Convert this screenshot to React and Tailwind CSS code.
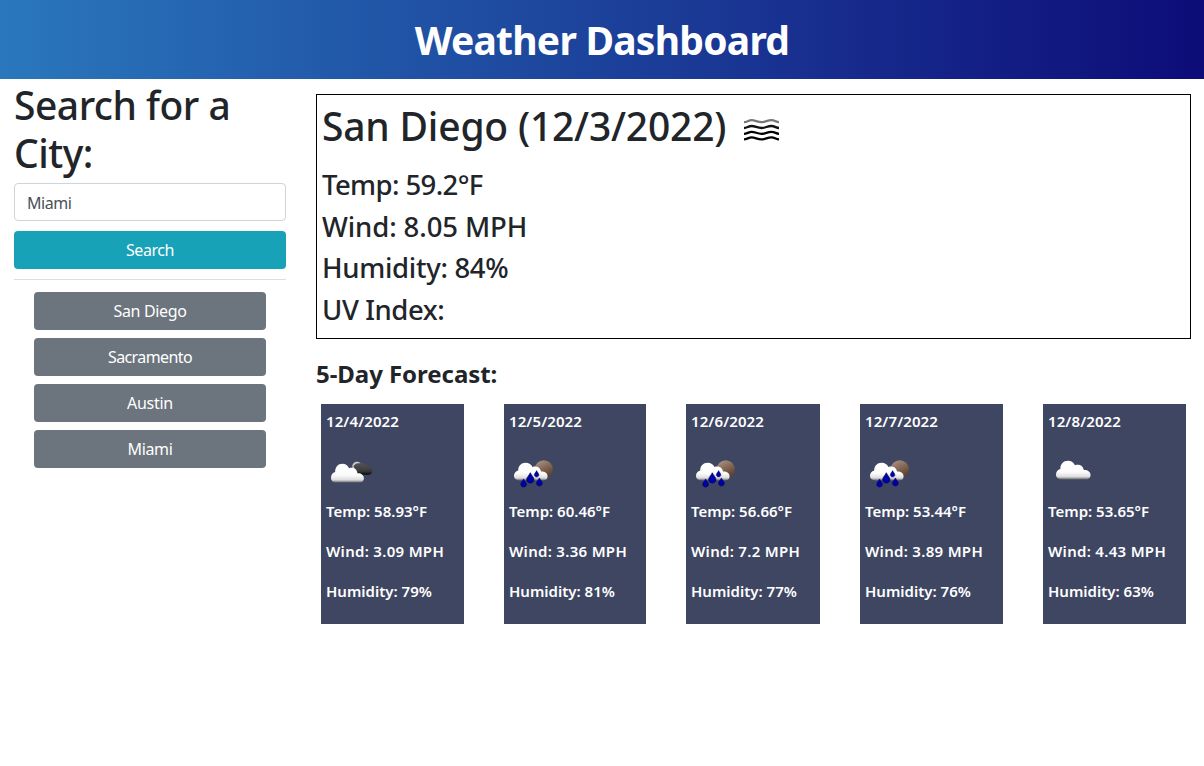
const CLOUD =
  "M5.2 18.6C2 18.6 0 16.6 0 13.8C0 11 1.6 9 4.2 8.2C4.2 3.6 7.2 0.2 11.6 0.2C14.9 0.2 17.4 2 18.4 4.6C19.3 4.1 20.2 4 21.2 4C24.4 4 26.6 6.2 27 9.4C30.8 9.2 33.6 11.3 33.6 14.4C33.6 17 31.6 18.6 29 18.6Z";

function Gradients() {
  return (
    <svg width="0" height="0" className="absolute" aria-hidden="true">
      <defs>
        <linearGradient id="cloud" x1="0" y1="0" x2="0" y2="1">
          <stop offset="0" stopColor="#ffffff" />
          <stop offset="0.6" stopColor="#fcfcfc" />
          <stop offset="0.86" stopColor="#dcdcdc" />
          <stop offset="0.93" stopColor="#a0a0a0" />
          <stop offset="1" stopColor="#66676c" />
        </linearGradient>
        <linearGradient id="dark" x1="0" y1="0" x2="0" y2="1">
          <stop offset="0" stopColor="#555555" />
          <stop offset="0.7" stopColor="#3a3a3a" />
          <stop offset="1" stopColor="#090909" />
        </linearGradient>
        <linearGradient id="moon" x1="0" y1="0" x2="0.5" y2="1">
          <stop offset="0" stopColor="#b29a8b" />
          <stop offset="0.5" stopColor="#876c59" />
          <stop offset="1" stopColor="#5e412c" />
        </linearGradient>
      </defs>
    </svg>
  );
}

function Drop({ x, y, s }) {
  return (
    <path
      transform={`translate(${x} ${y}) scale(${s})`}
      d="M0 -4.2C1 -1.8 2.9 -0.6 2.9 1.2C2.9 2.9 1.6 4 0 4C-1.6 4 -2.9 2.9 -2.9 1.2C-2.9 -0.6 -1 -1.8 0 -4.2Z"
      fill="#0000a8"
      stroke="#00005f"
      strokeWidth="0.6"
    />
  );
}

function Icon({ kind }) {
  return (
    <svg viewBox="0 0 50 50" className="block size-[50px]">
      {kind === "broken" && (
        <>
          <path d="M26.5 22C25.6 18 28 15.7 31 15.7C32.6 15.7 34 16.3 34.8 17.3L29 25Z" fill="#c8c8c8" />
          <path d="M27.5 20.5C28.2 18 31 16.7 33.4 17.3C35 16.2 37.7 16.6 38.8 18.8C39.6 18.6 41 19.1 41.5 20.6C44.5 20.2 46.2 21.7 46.2 24.6C46.2 27.4 45.3 28.7 43 28.7H32Z" fill="url(#dark)" />
          <path d={CLOUD} transform="translate(5 17.6) scale(.98 1.02)" fill="url(#cloud)" />
        </>
      )}
      {kind === "rain" && (
        <>
          <circle cx="34.8" cy="23.2" r="9" fill="url(#moon)" />
          <path d={CLOUD} transform="translate(5 16.6) scale(1 .96)" fill="url(#cloud)" />
          <Drop x={14.6} y={37.1} s={0.98} />
          <Drop x={21.3} y={32} s={1.25} />
          <Drop x={27.6} y={27.9} s={0.78} />
          <Drop x={30.4} y={36} s={0.98} />
        </>
      )}
      {kind === "cloudy" && (
        <path d={CLOUD} transform="translate(8 14.6) scale(1.03 1.01)" fill="url(#cloud)" />
      )}
    </svg>
  );
}

function FogIcon() {
  const wave = "c3 0 4.5-2 7.7-2s6 2 9.8 2 6-2 9.8-2 4.7 2 7.7 2";
  return (
    <svg viewBox="0 0 50 50" className="size-[50px]" fill="none" strokeWidth="2.3">
      <path d={`M8 17.2${wave}`} stroke="#777777" />
      <path d={`M8 23${wave}`} stroke="#111111" />
      <path d={`M8 28.8${wave}`} stroke="#000000" />
      <path d={`M8 34.4${wave}`} stroke="#000000" />
    </svg>
  );
}

const history = [
  ["San Diego", "tracking-[-0.35px]"],
  ["Sacramento", "tracking-[-0.6px]"],
  ["Austin", "tracking-[-0.3px]"],
  ["Miami", "tracking-[-0.35px]"],
];

const current = [
  ["Temp: 59.2°F", "tracking-[-0.6px]"],
  ["Wind: 8.05 MPH", "tracking-[-0.1px]"],
  ["Humidity: 84%", "tracking-[-0.3px]"],
  ["UV Index:", "tracking-[-0.4px]"],
];

const days = [
  { date: "12/4/2022", icon: "broken", temp: "58.93", wind: "3.09", humidity: 79, width: "w-[143px]" },
  { date: "12/5/2022", icon: "rain", temp: "60.46", wind: "3.36", humidity: 81, width: "w-[142px]" },
  { date: "12/6/2022", icon: "rain", temp: "56.66", wind: "7.2", humidity: 77, width: "w-[134px]" },
  { date: "12/7/2022", icon: "rain", temp: "53.44", wind: "3.89", humidity: 76, width: "w-[143px]" },
  { date: "12/8/2022", icon: "cloudy", temp: "53.65", wind: "4.43", humidity: 63, width: "w-[143px]" },
];

export default function App() {
  return (
    <div className="min-h-screen bg-white font-['Noto_Sans','Open_Sans',sans-serif] text-[#212529]">
      <Gradients />
      <header className="flex h-[79px] items-center justify-center bg-[linear-gradient(to_right,#2a77bd,#2053a5_34%,#182f8f_67%,#0d0c78)]">
        <h1 className="text-[39px] leading-[48px] font-bold tracking-[-0.75px] text-white">Weather Dashboard</h1>
      </header>
      <div className="flex">
        <aside className="w-[300px] px-[14px] pt-[2px]">
          <h2 className="text-[39px] leading-[48px] font-medium tracking-[-0.5px]">Search for a City:</h2>
          <input
            type="text"
            defaultValue="Miami"
            className="mt-[6px] block h-[38px] w-full rounded border border-[#ced4da] px-3 pt-[2px] text-base tracking-[-0.45px] text-[#495057]"
          />
          <button className="mt-[10px] block h-[38px] w-full rounded bg-[#17a2b8] text-base tracking-[-0.45px] text-white">
            Search
          </button>
          <hr className="mt-[10px] border-[#dfdfdf]" />
          <div className="mt-3 flex flex-col gap-2 px-5">
            {history.map(([name, tracking]) => (
              <button key={name} className={`h-[38px] rounded bg-[#6c757d] text-base text-white ${tracking}`}>
                {name}
              </button>
            ))}
          </div>
        </aside>
        <main className="ml-4 w-[875px] pt-[15px]">
          <section className="h-[245px] border border-black px-[5px] pt-[5px]">
            <div className="flex h-[60px] items-start gap-[10px]">
              <h2 className="pt-[2px] text-[39px] leading-[48px] font-medium tracking-[-0.2px] whitespace-nowrap">
                San Diego (12/3/2022)
              </h2>
              <div className="pt-[5px]">
                <FogIcon />
              </div>
            </div>
            <div className="flex flex-col pt-1">
              {current.map(([line, tracking]) => (
                <p key={line} className={`text-[27.5px] leading-[41.6px] font-medium ${tracking}`}>{line}</p>
              ))}
            </div>
          </section>
          <h3 className="mt-5 text-[24px] leading-[29px] font-bold tracking-[-0.05px]">5-Day Forecast:</h3>
          <div className="mt-4 flex justify-between px-[5px]">
            {days.map((d) => (
              <article key={d.date} className={`h-[220px] bg-[#3e4662] pt-[5px] pl-[5px] text-[15px] leading-6 font-semibold whitespace-nowrap text-white ${d.width}`}>
                <p className="tracking-[0.1px]">{d.date}</p>
                <div className="pt-[13px]">
                  <Icon kind={d.icon} />
                </div>
                <div className="flex flex-col gap-4 pt-[3px]">
                  <p>Temp: {d.temp}°F</p>
                  <p className="tracking-[0.3px]">Wind: {d.wind} MPH</p>
                  <p>Humidity: {d.humidity}%</p>
                </div>
              </article>
            ))}
          </div>
        </main>
      </div>
    </div>
  );
}
